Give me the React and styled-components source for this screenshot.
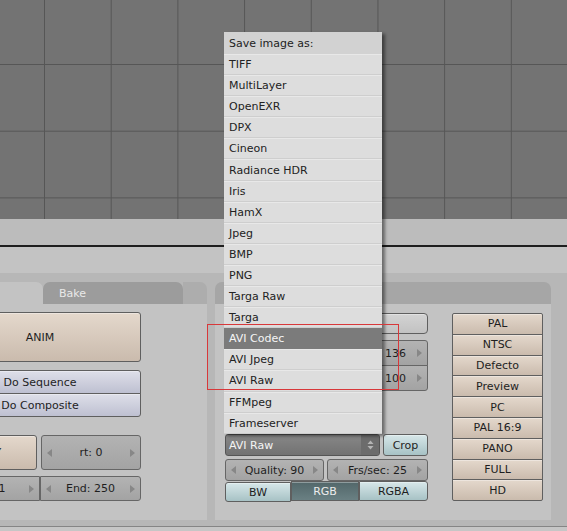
import React from "react";
import styled, { createGlobalStyle } from "styled-components";

const Global = createGlobalStyle`
  html, body { margin: 0; padding: 0; background: #737373; }
  body { font-family: "DejaVu Sans", "Liberation Sans", sans-serif; font-size: 11px; color: #1e1e1e; }
  * { box-sizing: border-box; }
`;

const Screen = styled.div`
  position: relative;
  width: 567px;
  height: 531px;
  overflow: hidden;
  display: flex;
  flex-direction: column;
`;

const Viewport = styled.div`
  flex: none;
  height: 219px;
  background-color: #737373;
  background-image: linear-gradient(to right, #565656 0 1px, transparent 1px),
    linear-gradient(to bottom, #565656 0 1px, transparent 1px);
  background-size: 66.7px 66.7px;
  background-position: 44px 64px;
`;

const HeaderBar = styled.div`
  flex: none;
  height: 28px;
  background: #bcbcbc;
  border-bottom: 2px solid #1e1e1e;
`;

const Strip = styled.div`
  flex: none;
  height: 26px;
  background: #c3c3c3;
`;

const PanelsArea = styled.div`
  flex: none;
  height: 253px;
  background: #b7b7b7;
  padding: 9px 0 6px 0;
  display: flex;
  gap: 8px;
`;

const Footer = styled.div`
  flex: 1;
  background: #c6c6c6;
  border-top: 1px solid #858585;
`;

const Panel = styled.div`
  flex: none;
  width: ${(p) => p.$width}px;
  margin-left: ${(p) => p.$offset || 0}px;
  display: flex;
  flex-direction: column;
`;

const TabBar = styled.div`
  height: 22px;
  display: flex;
  align-items: stretch;
`;

const Tab = styled.div`
  flex: ${(p) => (p.$width ? "none" : "1")};
  width: ${(p) => (p.$width ? `${p.$width}px` : "auto")};
  display: flex;
  align-items: center;
  justify-content: ${(p) => (p.$active ? "center" : "flex-start")};
  padding-left: ${(p) => (p.$active ? 0 : 16)}px;
  color: ${(p) => (p.$active ? "#1e1e1e" : "#e9e9e9")};
  background: ${(p) => (p.$active ? "#c3c3c3" : "#9c9c9c")};
  border-radius: ${(p) => (p.$active ? "0 7px 0 0" : "7px 7px 0 0")};
`;

const TabFill = styled.div`
  flex: none;
  width: 24px;
  background: #adadad;
  border-radius: 0 7px 0 0;
`;

const PanelHead = styled.div`
  height: 22px;
  background: #a6a6a6;
  border-radius: 7px 7px 0 0;
`;

const PanelBody = styled.div`
  flex: 1;
  background: #c3c3c3;
  padding: ${(p) => p.$pad};
  display: flex;
  flex-direction: ${(p) => p.$dir || "column"};
  align-items: flex-start;
  gap: ${(p) => p.$gap || 0}px;
  & > * { align-self: ${(p) => (p.$dir === "row" ? "flex-start" : "stretch")}; }
`;

const Btn = styled.div`
  height: ${(p) => p.$h}px;
  width: ${(p) => (p.$w ? `${p.$w}px` : "auto")};
  flex: ${(p) => (p.$grow ? "1 1 0" : "none")};
  display: flex;
  align-items: center;
  justify-content: center;
  white-space: nowrap;
  border: 1px solid #5f5f5f;
  border-radius: ${(p) => p.$r || "3px"};
  color: ${(p) => (p.$tone === "sel" ? "#ececec" : "#1e1e1e")};
  background: ${(p) =>
    ({
      beige: "linear-gradient(#e4d8cc, #cabbad)",
      lavender: "linear-gradient(#dedfe9, #bec0d1)",
      blue: "linear-gradient(#d7e7e9, #a7c2c5)",
      sel: "linear-gradient(#52676a, #6a8083)",
      plain: "linear-gradient(#d3d3d3, #c2c2c2)",
    }[p.$tone])};
  box-shadow: inset 0 1px 0 rgba(255, 255, 255, 0.35);
  & + & {
    margin-top: ${(p) => (p.$stack ? "-1px" : "0")};
  }
`;

const Field = styled.div`
  height: ${(p) => p.$h}px;
  width: ${(p) => (p.$w ? `${p.$w}px` : "auto")};
  flex: ${(p) => (p.$grow ? "1 1 0" : "none")};
  display: flex;
  align-items: center;
  padding: 0 5px;
  border: 1px solid #666666;
  border-radius: ${(p) => p.$r || "3px"};
  background: linear-gradient(#b3b3b3, #a3a3a3);
  color: #1e1e1e;
  & > span {
    flex: 1;
    text-align: ${(p) => (p.$end ? "right" : "center")};
    padding-right: ${(p) => (p.$end ? 11 : 0)}px;
    white-space: nowrap;
    overflow: hidden;
  }
  & > svg {
    flex: none;
    color: #878787;
  }
  & + & {
    margin-left: ${(p) => (p.$join ? "-1px" : "0")};
  }
`;

const Row = styled.div`
  display: flex;
  height: ${(p) => p.$h}px;
  gap: ${(p) => p.$gap || 0}px;
  margin-top: ${(p) => p.$mt || 0}px;
`;

const Stack = styled.div`
  display: flex;
  flex-direction: column;
  margin-top: ${(p) => p.$mt || 0}px;
  width: ${(p) => (p.$w ? `${p.$w}px` : "auto")};
  flex: none;
`;

const FieldGrid = styled.div`
  display: grid;
  grid-template-columns: 99px 101px;
  grid-template-rows: 26px 25px;
  column-gap: 3px;
  margin-top: 6px;
  & > *:nth-child(n + 3) { margin-top: -1px; height: 26px; }
`;

const Dropdown = styled.div`
  width: 155px;
  flex: none;
  display: flex;
  align-items: stretch;
  border: 1px solid #555;
  border-radius: 3px;
  background: linear-gradient(#878787, #727272);
  color: #f4f4f4;
  overflow: hidden;
  & > span {
    flex: 1;
    display: flex;
    align-items: center;
    padding-left: 3px;
  }
`;

const DropArrow = styled.div`
  width: 18px;
  display: flex;
  align-items: center;
  justify-content: center;
  background: #6c6c6c;
`;

const Menu = styled.div`
  position: absolute;
  left: 224px;
  top: 32px;
  width: 158px;
  background: #dddddd;
  box-shadow: 3px 2px 3px rgba(0, 0, 0, 0.45);
  z-index: 5;
`;

const MenuTitle = styled.div`
  height: 22px;
  display: flex;
  align-items: center;
  padding-left: 5px;
  background: #d2d2d2;
  color: #222;
`;

const MenuItem = styled.div`
  height: 21.1px;
  display: flex;
  align-items: center;
  padding-left: 5px;
  color: ${(p) => (p.$active ? "#f5f5f5" : "#222")};
  background: ${(p) => (p.$active ? "#7b7b7b" : "#dddddd")};
  border-top: 1px solid ${(p) => (p.$active ? "#7b7b7b" : "#e8e8e8")};
  border-bottom: 1px solid ${(p) => (p.$active ? "#7b7b7b" : "#cecece")};
`;

const Highlight = styled.div`
  position: absolute;
  left: 207px;
  top: 324px;
  width: 192px;
  height: 66px;
  border: 1px solid #d8383a;
  z-index: 6;
  pointer-events: none;
`;

const LeftTri = () => (
  <svg width="5" height="8" viewBox="0 0 5 8">
    <path d="M5 0 L0 4 L5 8 Z" fill="currentColor" />
  </svg>
);
const RightTri = () => (
  <svg width="5" height="8" viewBox="0 0 5 8">
    <path d="M0 0 L5 4 L0 8 Z" fill="currentColor" />
  </svg>
);
const UpDown = () => (
  <svg width="7" height="10" viewBox="0 0 7 10">
    <path d="M3.5 0.5 L6.5 4 L0.5 4 Z M0.5 6 L6.5 6 L3.5 9.5 Z" fill="#b4b4b4" />
  </svg>
);

const Num = ({ children, ...rest }) => (
  <Field {...rest}>
    <LeftTri />
    <span>{children}</span>
    <RightTri />
  </Field>
);

const formats = [
  "TIFF", "MultiLayer", "OpenEXR", "DPX", "Cineon", "Radiance HDR", "Iris", "HamX",
  "Jpeg", "BMP", "PNG", "Targa Raw", "Targa", "AVI Codec", "AVI Jpeg", "AVI Raw",
  "FFMpeg", "Frameserver",
];

const presets = ["PAL", "NTSC", "Defecto", "Preview", "PC", "PAL 16:9", "PANO", "FULL", "HD"];

export default function App() {
  return (
    <Screen>
      <Global />
      <Viewport />
      <HeaderBar />
      <Strip />
      <PanelsArea>
        <Panel $width={278} $offset={-71}>
          <TabBar>
            <Tab $active>Anim</Tab>
            <Tab $width={140}>Bake</Tab>
            <TabFill />
          </TabBar>
          <PanelBody $pad="8px 66px 0 10px">
            <Btn $h={50} $tone="beige">ANIM</Btn>
            <Stack $mt={8}>
              <Btn $h={24} $tone="lavender" $r="3px 3px 0 0" $stack>Do Sequence</Btn>
              <Btn $h={24} $tone="lavender" $r="0 0 3px 3px" $stack>Do Composite</Btn>
            </Stack>
            <Row $h={35} $gap={4} $mt={18}>
              <Btn $h={35} $w={98} $tone="beige">PLAY</Btn>
              <Num $h={35} $grow>rt: 0</Num>
            </Row>
            <Row $h={25} $mt={6}>
              <Num $h={25} $w={101} $r="3px 0 0 3px">Sta: 1</Num>
              <Num $h={25} $grow $join $r="0 3px 3px 0">End: 250</Num>
            </Row>
          </PanelBody>
        </Panel>

        <Panel $width={336}>
          <PanelHead />
          <PanelBody $pad="9px 8px 0 10px" $dir="row" $gap={24}>
            <Stack $w={203}>
              <Btn $h={21} $tone="plain" $r="4px" />
              <FieldGrid>
                <Num $h={26} $r="3px 3px 0 0" />
                <Num $h={26} $r="3px 3px 0 0" $end>136</Num>
                <Num $h={25} $r="0 0 3px 3px" />
                <Num $h={25} $r="0 0 3px 3px" $end>100</Num>
              </FieldGrid>
              <Row $h={22} $gap={3} $mt={43}>
                <Dropdown>
                  <span>AVI Raw</span>
                  <DropArrow>
                    <UpDown />
                  </DropArrow>
                </Dropdown>
                <Btn $h={22} $grow $tone="blue">Crop</Btn>
              </Row>
              <Row $h={22} $gap={3} $mt={3}>
                <Num $h={22} $w={99}>Quality: 90</Num>
                <Num $h={22} $grow>Frs/sec: 25</Num>
              </Row>
              <Row $h={20} $mt={1}>
                <Btn $h={20} $w={66} $tone="blue" $r="3px 0 0 3px">BW</Btn>
                <Btn $h={20} $w={68} $tone="sel" $r="0">RGB</Btn>
                <Btn $h={20} $grow $tone="blue" $r="0 3px 3px 0">RGBA</Btn>
              </Row>
            </Stack>
            <Stack $w={91}>
              {presets.map((p, i) => (
                <Btn
                  key={p}
                  $h={21.8}
                  $tone="beige"
                  $stack
                  $r={i === 0 ? "2px 2px 0 0" : i === presets.length - 1 ? "0 0 2px 2px" : "0"}
                >
                  {p}
                </Btn>
              ))}
            </Stack>
          </PanelBody>
        </Panel>
      </PanelsArea>
      <Footer />

      <Menu>
        <MenuTitle>Save image as:</MenuTitle>
        {formats.map((f) => (
          <MenuItem key={f} $active={f === "AVI Codec"}>
            {f}
          </MenuItem>
        ))}
      </Menu>
      <Highlight />
    </Screen>
  );
}
